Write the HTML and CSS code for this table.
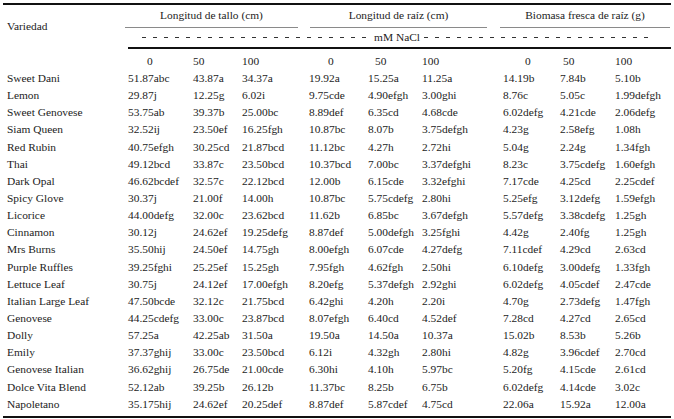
FILE: index.html
```html
<!DOCTYPE html>
<html lang="es">
<head>
<meta charset="utf-8">
<title>Tabla</title>
<link rel="stylesheet" href="styles.css">
</head>
<body>
<table class="tbl">
  <colgroup>
    <col class="c-var"><col class="c1"><col class="c2"><col class="c3"><col class="c4"><col class="c5"><col class="c6"><col class="c7"><col class="c8"><col class="c9">
  </colgroup>
  <thead>
    <tr class="r-group">
      <th class="var" rowspan="2">Variedad</th>
      <th colspan="3" class="grp"><div class="grp-in g1">Longitud de tallo (cm)</div></th>
      <th colspan="3" class="grp"><div class="grp-in g2">Longitud de raíz (cm)</div></th>
      <th colspan="3" class="grp"><div class="grp-in g3">Biomasa fresca de raíz (g)</div></th>
    </tr>
    <tr class="r-unit">
      <th colspan="9"><div class="unit"><span class="dash"></span><span class="unit-t">mM NaCl</span><span class="dash"></span></div></th>
    </tr>
  </thead>
  <tbody>
    <tr class="r-sub">
      <td></td>
      <td class="s0">0</td><td>50</td><td>100</td>
      <td class="s0">0</td><td class="s50r">50</td><td>100</td>
      <td class="s0b">0</td><td class="s50">50</td><td>100</td>
    </tr>
    <tr><td class="var">Sweet Dani</td><td>51.87abc</td><td>43.87a</td><td>34.37a</td><td>19.92a</td><td>15.25a</td><td>11.25a</td><td>14.19b</td><td>7.84b</td><td>5.10b</td></tr>
    <tr><td class="var">Lemon</td><td>29.87j</td><td>12.25g</td><td>6.02i</td><td>9.75cde</td><td>4.90efgh</td><td>3.00ghi</td><td>8.76c</td><td>5.05c</td><td>1.99defgh</td></tr>
    <tr><td class="var">Sweet Genovese</td><td>53.75ab</td><td>39.37b</td><td>25.00bc</td><td>8.89def</td><td>6.35cd</td><td>4.68cde</td><td>6.02defg</td><td>4.21cde</td><td>2.06defg</td></tr>
    <tr><td class="var">Siam Queen</td><td>32.52ij</td><td>23.50ef</td><td>16.25fgh</td><td>10.87bc</td><td>8.07b</td><td>3.75defgh</td><td>4.23g</td><td>2.58efg</td><td>1.08h</td></tr>
    <tr><td class="var">Red Rubin</td><td>40.75efgh</td><td>30.25cd</td><td>21.87bcd</td><td>11.12bc</td><td>4.27h</td><td>2.72hi</td><td>5.04g</td><td>2.24g</td><td>1.34fgh</td></tr>
    <tr><td class="var">Thai</td><td>49.12bcd</td><td>33.87c</td><td>23.50bcd</td><td>10.37bcd</td><td>7.00bc</td><td>3.37defghi</td><td>8.23c</td><td>3.75cdefg</td><td>1.60efgh</td></tr>
    <tr><td class="var">Dark Opal</td><td>46.62bcdef</td><td>32.57c</td><td>22.12bcd</td><td>12.00b</td><td>6.15cde</td><td>3.32efghi</td><td>7.17cde</td><td>4.25cd</td><td>2.25cdef</td></tr>
    <tr><td class="var">Spicy Glove</td><td>30.37j</td><td>21.00f</td><td>14.00h</td><td>10.87bc</td><td>5.75cdefg</td><td>2.80hi</td><td>5.25efg</td><td>3.12defg</td><td>1.59efgh</td></tr>
    <tr><td class="var">Licorice</td><td>44.00defg</td><td>32.00c</td><td>23.62bcd</td><td>11.62b</td><td>6.85bc</td><td>3.67defgh</td><td>5.57defg</td><td>3.38cdefg</td><td>1.25gh</td></tr>
    <tr><td class="var">Cinnamon</td><td>30.12j</td><td>24.62ef</td><td>19.25defg</td><td>8.87def</td><td>5.00defgh</td><td>3.25fghi</td><td>4.42g</td><td>2.40fg</td><td>1.25gh</td></tr>
    <tr><td class="var">Mrs Burns</td><td>35.50hij</td><td>24.50ef</td><td>14.75gh</td><td>8.00efgh</td><td>6.07cde</td><td>4.27defg</td><td>7.11cdef</td><td>4.29cd</td><td>2.63cd</td></tr>
    <tr><td class="var">Purple Ruffles</td><td>39.25fghi</td><td>25.25ef</td><td>15.25gh</td><td>7.95fgh</td><td>4.62fgh</td><td>2.50hi</td><td>6.10defg</td><td>3.00defg</td><td>1.33fgh</td></tr>
    <tr><td class="var">Lettuce Leaf</td><td>30.75j</td><td>24.12ef</td><td>17.00efgh</td><td>8.20efg</td><td>5.37defgh</td><td>2.92ghi</td><td>6.02defg</td><td>4.05cdef</td><td>2.47cde</td></tr>
    <tr><td class="var">Italian Large Leaf</td><td>47.50bcde</td><td>32.12c</td><td>21.75bcd</td><td>6.42ghi</td><td>4.20h</td><td>2.20i</td><td>4.70g</td><td>2.73defg</td><td>1.47fgh</td></tr>
    <tr><td class="var">Genovese</td><td>44.25cdefg</td><td>33.00c</td><td>23.87bcd</td><td>8.07efgh</td><td>6.40cd</td><td>4.52def</td><td>7.28cd</td><td>4.27cd</td><td>2.65cd</td></tr>
    <tr><td class="var">Dolly</td><td>57.25a</td><td>42.25ab</td><td>31.50a</td><td>19.50a</td><td>14.50a</td><td>10.37a</td><td>15.02b</td><td>8.53b</td><td>5.26b</td></tr>
    <tr><td class="var">Emily</td><td>37.37ghij</td><td>33.00c</td><td>23.50bcd</td><td>6.12i</td><td>4.32gh</td><td>2.80hi</td><td>4.82g</td><td>3.96cdef</td><td>2.70cd</td></tr>
    <tr><td class="var">Genovese Italian</td><td>36.62ghij</td><td>26.75de</td><td>21.00cde</td><td>6.30hi</td><td>4.10h</td><td>5.97bc</td><td>5.20fg</td><td>4.15cde</td><td>2.61cd</td></tr>
    <tr><td class="var">Dolce Vita Blend</td><td>52.12ab</td><td>39.25b</td><td>26.12b</td><td>11.37bc</td><td>8.25b</td><td>6.75b</td><td>6.02defg</td><td>4.14cde</td><td>3.02c</td></tr>
    <tr class="last"><td class="var">Napoletano</td><td>35.175hij</td><td>24.62ef</td><td>20.25def</td><td>8.87def</td><td>5.87cdef</td><td>4.75cd</td><td>22.06a</td><td>15.92a</td><td>12.00a</td></tr>
  </tbody>
</table>
</body>
</html>
```

FILE: styles.css
```css
html, body {
  margin: 0;
  padding: 0;
  background: #ffffff;
}

body {
  padding: 3px 3px 0 3px;
  font-family: "Liberation Serif", "Times New Roman", serif;
  font-size: 11.4px;
  color: #1c1c1c;
}

.tbl {
  border-collapse: collapse;
  table-layout: fixed;
  width: 668px;
  border-top: 2px solid #111;
  border-bottom: 2px solid #111;
  font-family: inherit;
  font-size: inherit;
}

.c-var { width: 125px; }
.c1 { width: 65px; }
.c2 { width: 49px; }
.c3 { width: 67px; }
.c4 { width: 59px; }
.c5 { width: 54px; }
.c6 { width: 81px; }
.c7 { width: 57px; }
.c8 { width: 55px; }
.c9 { width: 56px; }

th, td {
  padding: 0;
  font-weight: normal;
  text-align: left;
  white-space: nowrap;
  line-height: 17px;
  height: 17.15px;
  font-family: inherit;
}

.var {
  padding-left: 4px;
}

th.var {
  vertical-align: middle;
}

.r-group th.grp {
  height: 23px;
  vertical-align: bottom;
  padding: 0;
}

.grp-in {
  text-align: center;
  line-height: 16px;
  padding-bottom: 4px;
  border-bottom: 1px solid #8a8a8a;
}

.g1 { margin: 0 11px 0 -3px; }
.g2 { margin: 0 16px 0 1px; }
.g3 { margin: 0 1px 0 -3px; }

.r-unit th {
  height: 19px;
  border-bottom: 2px solid #111;
}

.unit {
  display: flex;
  align-items: center;
  padding: 0 19px 0 14px;
  gap: 4px;
}

.dash {
  flex: 1;
  height: 1px;
  background: repeating-linear-gradient(to right, #333 0 4px, transparent 4px 11px);
}

.unit-t {
  line-height: 17px;
}

.r-sub td {
  height: 18px;
  line-height: 18px;
  padding-top: 3px;
}

.s0 { padding-left: 19px; }
.s0b { padding-left: 22px; }
.s50 { padding-left: 3px; }
.s50r { padding-left: 7px; }

tr.last td {
  padding-bottom: 3px;
}
```
